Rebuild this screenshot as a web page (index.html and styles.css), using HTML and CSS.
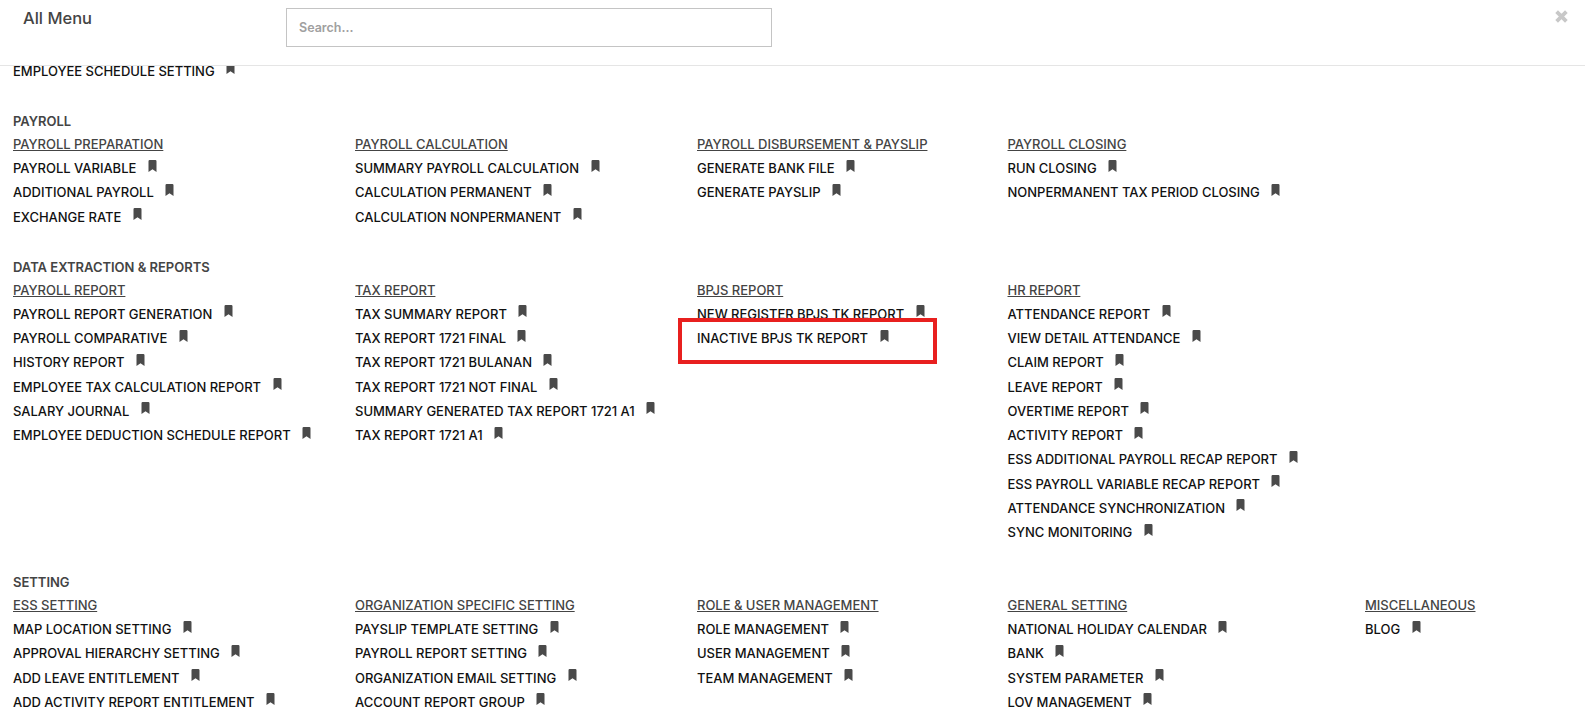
FILE: index.html
```html
<!DOCTYPE html>
<html>
<head>
    <title>All Menu</title>
    <link rel="stylesheet" href="styles.css">
</head>

<body>
    <svg class="defs" width="0" height="0">
        <symbol id="mark" viewBox="0 0 9 12"><path d="M0.5 1.2Q0.5 0 1.7 0H7.3Q8.5 0 8.5 1.2V12L4.5 9.2L0.5 12Z"/></symbol>
    </svg>

    <div class="header">
        <div class="title">All Menu</div>
        <input class="search" type="text" placeholder="Search...">
        <svg class="close" viewBox="0 0 12 12"><path d="M1.5 1.5L10.5 10.5M10.5 1.5L1.5 10.5"/></svg>
    </div>

    <div class="content">
        <div class="item item-top">EMPLOYEE SCHEDULE SETTING <svg class="mark"><use href="#mark"/></svg></div>

        <div class="section">
            <div class="section-title">PAYROLL</div>
            <div class="columns">
                <div class="col col-a">
                    <div class="group">PAYROLL PREPARATION</div>
                    <div class="item">PAYROLL VARIABLE <svg class="mark"><use href="#mark"/></svg></div>
                    <div class="item">ADDITIONAL PAYROLL <svg class="mark"><use href="#mark"/></svg></div>
                    <div class="item">EXCHANGE RATE <svg class="mark"><use href="#mark"/></svg></div>
                </div>
                <div class="col col-b">
                    <div class="group">PAYROLL CALCULATION</div>
                    <div class="item">SUMMARY PAYROLL CALCULATION <svg class="mark"><use href="#mark"/></svg></div>
                    <div class="item">CALCULATION PERMANENT <svg class="mark"><use href="#mark"/></svg></div>
                    <div class="item">CALCULATION NONPERMANENT <svg class="mark"><use href="#mark"/></svg></div>
                </div>
                <div class="col col-c">
                    <div class="group">PAYROLL DISBURSEMENT &amp; PAYSLIP</div>
                    <div class="item">GENERATE BANK FILE <svg class="mark"><use href="#mark"/></svg></div>
                    <div class="item">GENERATE PAYSLIP <svg class="mark"><use href="#mark"/></svg></div>
                </div>
                <div class="col col-d">
                    <div class="group">PAYROLL CLOSING</div>
                    <div class="item">RUN CLOSING <svg class="mark"><use href="#mark"/></svg></div>
                    <div class="item">NONPERMANENT TAX PERIOD CLOSING <svg class="mark"><use href="#mark"/></svg></div>
                </div>
            </div>
        </div>

        <div class="section">
            <div class="section-title">DATA EXTRACTION &amp; REPORTS</div>
            <div class="columns">
                <div class="col col-a">
                    <div class="group">PAYROLL REPORT</div>
                    <div class="item">PAYROLL REPORT GENERATION <svg class="mark"><use href="#mark"/></svg></div>
                    <div class="item">PAYROLL COMPARATIVE <svg class="mark"><use href="#mark"/></svg></div>
                    <div class="item">HISTORY REPORT <svg class="mark"><use href="#mark"/></svg></div>
                    <div class="item">EMPLOYEE TAX CALCULATION REPORT <svg class="mark"><use href="#mark"/></svg></div>
                    <div class="item">SALARY JOURNAL <svg class="mark"><use href="#mark"/></svg></div>
                    <div class="item">EMPLOYEE DEDUCTION SCHEDULE REPORT <svg class="mark"><use href="#mark"/></svg></div>
                </div>
                <div class="col col-b">
                    <div class="group">TAX REPORT</div>
                    <div class="item">TAX SUMMARY REPORT <svg class="mark"><use href="#mark"/></svg></div>
                    <div class="item">TAX REPORT 1721 FINAL <svg class="mark"><use href="#mark"/></svg></div>
                    <div class="item">TAX REPORT 1721 BULANAN <svg class="mark"><use href="#mark"/></svg></div>
                    <div class="item">TAX REPORT 1721 NOT FINAL <svg class="mark"><use href="#mark"/></svg></div>
                    <div class="item">SUMMARY GENERATED TAX REPORT 1721 A1 <svg class="mark"><use href="#mark"/></svg></div>
                    <div class="item">TAX REPORT 1721 A1 <svg class="mark"><use href="#mark"/></svg></div>
                </div>
                <div class="col col-c">
                    <div class="group">BPJS REPORT</div>
                    <div class="item">NEW REGISTER BPJS TK REPORT <svg class="mark"><use href="#mark"/></svg></div>
                    <div class="item highlighted">INACTIVE BPJS TK REPORT <svg class="mark"><use href="#mark"/></svg></div>
                </div>
                <div class="col col-d">
                    <div class="group">HR REPORT</div>
                    <div class="item">ATTENDANCE REPORT <svg class="mark"><use href="#mark"/></svg></div>
                    <div class="item">VIEW DETAIL ATTENDANCE <svg class="mark"><use href="#mark"/></svg></div>
                    <div class="item">CLAIM REPORT <svg class="mark"><use href="#mark"/></svg></div>
                    <div class="item">LEAVE REPORT <svg class="mark"><use href="#mark"/></svg></div>
                    <div class="item">OVERTIME REPORT <svg class="mark"><use href="#mark"/></svg></div>
                    <div class="item">ACTIVITY REPORT <svg class="mark"><use href="#mark"/></svg></div>
                    <div class="item">ESS ADDITIONAL PAYROLL RECAP REPORT <svg class="mark"><use href="#mark"/></svg></div>
                    <div class="item">ESS PAYROLL VARIABLE RECAP REPORT <svg class="mark"><use href="#mark"/></svg></div>
                    <div class="item">ATTENDANCE SYNCHRONIZATION <svg class="mark"><use href="#mark"/></svg></div>
                    <div class="item">SYNC MONITORING <svg class="mark"><use href="#mark"/></svg></div>
                </div>
            </div>
        </div>

        <div class="section">
            <div class="section-title">SETTING</div>
            <div class="columns">
                <div class="col col-a">
                    <div class="group">ESS SETTING</div>
                    <div class="item">MAP LOCATION SETTING <svg class="mark"><use href="#mark"/></svg></div>
                    <div class="item">APPROVAL HIERARCHY SETTING <svg class="mark"><use href="#mark"/></svg></div>
                    <div class="item">ADD LEAVE ENTITLEMENT <svg class="mark"><use href="#mark"/></svg></div>
                    <div class="item">ADD ACTIVITY REPORT ENTITLEMENT <svg class="mark"><use href="#mark"/></svg></div>
                </div>
                <div class="col col-b">
                    <div class="group">ORGANIZATION SPECIFIC SETTING</div>
                    <div class="item">PAYSLIP TEMPLATE SETTING <svg class="mark"><use href="#mark"/></svg></div>
                    <div class="item">PAYROLL REPORT SETTING <svg class="mark"><use href="#mark"/></svg></div>
                    <div class="item">ORGANIZATION EMAIL SETTING <svg class="mark"><use href="#mark"/></svg></div>
                    <div class="item">ACCOUNT REPORT GROUP <svg class="mark"><use href="#mark"/></svg></div>
                </div>
                <div class="col col-c">
                    <div class="group">ROLE &amp; USER MANAGEMENT</div>
                    <div class="item">ROLE MANAGEMENT <svg class="mark"><use href="#mark"/></svg></div>
                    <div class="item">USER MANAGEMENT <svg class="mark"><use href="#mark"/></svg></div>
                    <div class="item">TEAM MANAGEMENT <svg class="mark"><use href="#mark"/></svg></div>
                </div>
                <div class="col col-d">
                    <div class="group">GENERAL SETTING</div>
                    <div class="item">NATIONAL HOLIDAY CALENDAR <svg class="mark"><use href="#mark"/></svg></div>
                    <div class="item">BANK <svg class="mark"><use href="#mark"/></svg></div>
                    <div class="item">SYSTEM PARAMETER <svg class="mark"><use href="#mark"/></svg></div>
                    <div class="item">LOV MANAGEMENT <svg class="mark"><use href="#mark"/></svg></div>
                </div>
                <div class="col">
                    <div class="group">MISCELLANEOUS</div>
                    <div class="item">BLOG <svg class="mark"><use href="#mark"/></svg></div>
                </div>
            </div>
        </div>
    </div>
</body>

</html>
```

FILE: styles.css
```css
html,
body {
    height: 100%;
}

body {
    margin: 0;
    font-family: "Inter", "Liberation Sans", sans-serif;
    background: #fff;
    color: #111;
    overflow: hidden;
    display: flex;
    flex-direction: column;
}

.defs {
    position: absolute;
}

.header {
    height: 66px;
    box-sizing: border-box;
    flex-shrink: 0;
    display: flex;
    align-items: flex-start;
    border-bottom: 1px solid #e5e5e5;
    padding: 8px 17px 0 23px;
}

.title {
    width: 263px;
    font-size: 16.5px;
    font-weight: 500;
    line-height: 20px;
    color: #444;
}

.search {
    width: 486px;
    height: 39px;
    box-sizing: border-box;
    border: 1px solid #c4c4c4;
    padding: 0 12px;
    font-family: inherit;
    font-size: 12.5px;
    font-weight: 600;
}

.search::placeholder {
    color: #a0a0a0;
}

.close {
    width: 13px;
    height: 13px;
    margin: 2px 0 0 auto;
    fill: none;
    stroke: #c8c8c8;
    stroke-width: 3.5;
}

.content {
    flex: 1;
    min-height: 0;
    overflow: hidden;
    padding: 0 13px;
}

.section {
    margin-top: 25.7px;
}

.section-title,
.group,
.item {
    font-size: 13px;
    line-height: 24.27px;
    letter-spacing: -0.02px;
    white-space: nowrap;
}

.section-title {
    font-weight: 600;
    color: #444;
}

.group {
    line-height: 22.77px;
    color: #444;
    font-weight: 500;
    text-decoration: underline;
}

.item {
    font-weight: 500;
    position: relative;
}

/* the row the list is scrolled to, only its lower part shows under the header */
.item-top {
    height: 21.5px;
    margin-top: -4px;
    line-height: 9px;
}

.mark {
    width: 9px;
    height: 12px;
    margin-left: 8px;
    fill: #4a4a4a;
    vertical-align: 1.5px;
}

.columns {
    display: flex;
}

.col-a,
.col-b {
    width: 342px;
}

.col-c {
    width: 310.5px;
}

.col-d {
    width: 357.5px;
}

/* red marker drawn over the list */
.highlighted::after {
    content: "";
    position: absolute;
    left: -19px;
    top: -8.5px;
    width: 259px;
    height: 46px;
    box-sizing: border-box;
    border: 4px solid #e8201f;
}
```
